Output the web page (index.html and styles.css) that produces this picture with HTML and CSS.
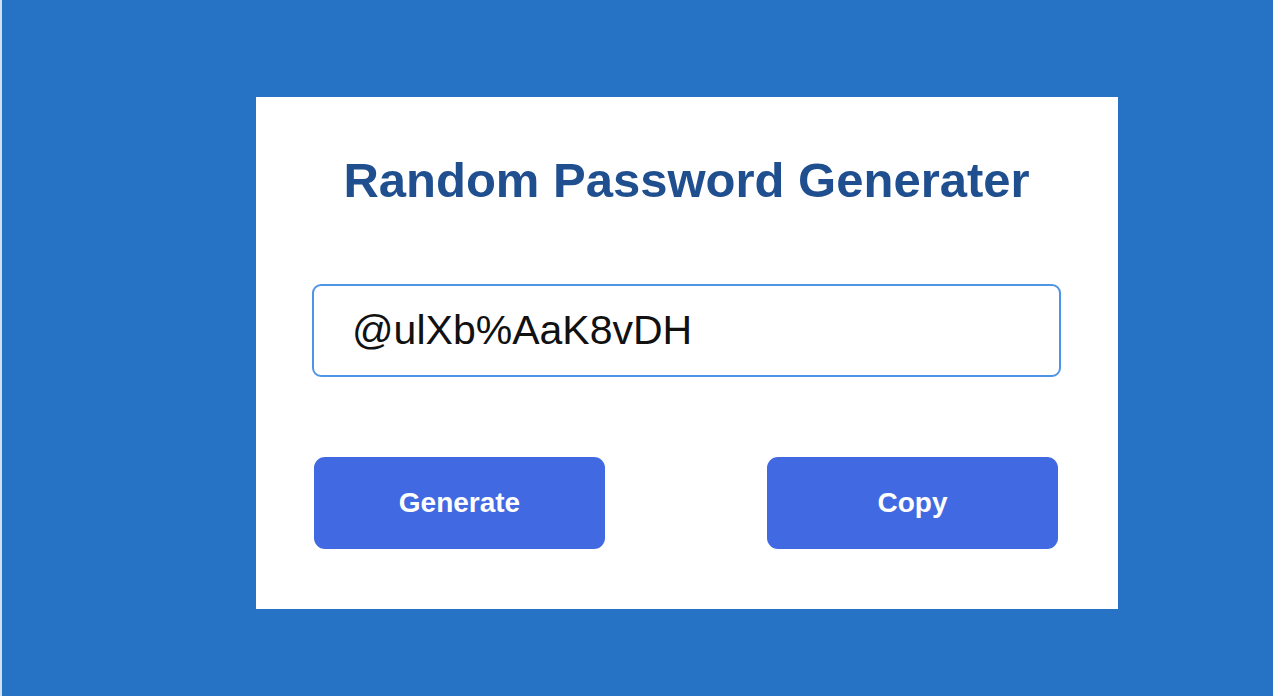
FILE: index.html
```html
<!DOCTYPE html>
<html lang="en">
<head>
<meta charset="utf-8">
<title>Random Password Generater</title>
<link rel="stylesheet" href="styles.css">
</head>
<body>
<div class="page">
  <div class="card">
    <h1 class="title">Random Password Generater</h1>
    <input class="password" type="text" value="@ulXb%AaK8vDH" readonly>
    <div class="actions">
      <button class="btn" type="button">Generate</button>
      <button class="btn" type="button">Copy</button>
    </div>
  </div>
</div>
</body>
</html>
```
FILE: styles.css
```css
* {
  box-sizing: border-box;
}

html, body {
  margin: 0;
  padding: 0;
  height: 100%;
}

body {
  background: #2673c5;
  font-family: "Liberation Sans", Arial, sans-serif;
}

.page {
  height: 100%;
  border-left: 2px solid #cfe0f3;
  padding: 97px 0 0 254px;
}

.card {
  width: 862px;
  height: 512px;
  background: #ffffff;
  padding: 55px 57px 60px 56px;
  display: flex;
  flex-direction: column;
}

.title {
  margin: 0;
  font-size: 49px;
  line-height: 56px;
  font-weight: 700;
  color: #1f4f8f;
  text-align: center;
}

.password {
  margin-top: 76px;
  width: 749px;
  height: 93px;
  border: 2px solid #4f95e6;
  border-radius: 9px;
  padding: 0 20px 0 38px;
  font-family: "Liberation Sans", Arial, sans-serif;
  font-size: 41px;
  color: #111111;
  background: #ffffff;
  outline: none;
}

.actions {
  margin-top: 80px;
  display: flex;
  justify-content: space-between;
  padding: 0 3px 0 2px;
}

.btn {
  width: 291px;
  height: 92px;
  border: none;
  border-radius: 11px;
  background: #4169e1;
  color: #ffffff;
  font-family: "Liberation Sans", Arial, sans-serif;
  font-size: 28px;
  font-weight: 700;
  cursor: pointer;
}

.btn + .btn {
  margin-right: 0;
}
```
